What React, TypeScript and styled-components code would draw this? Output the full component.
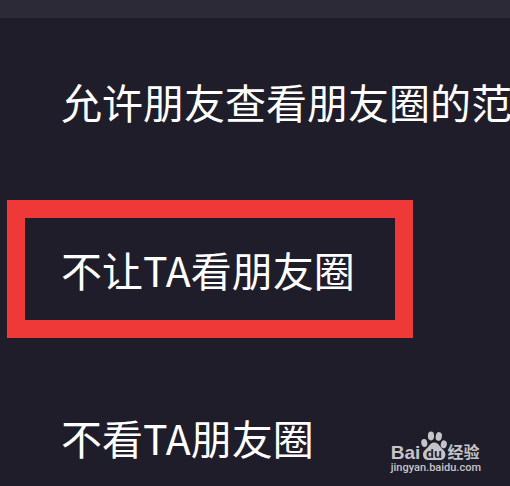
import React from 'react';
import styled, { createGlobalStyle } from 'styled-components';

const GlobalStyle = createGlobalStyle`
  * {
    box-sizing: border-box;
  }

  body {
    margin: 0;
    background: #1f1d2a;
    font-family: 'Noto Sans CJK SC', 'Noto Sans', sans-serif;
  }
`;

const Page = styled.main`
  position: relative;
  display: flex;
  flex-direction: column;
  height: 100vh;
  overflow: hidden;
  color: #fff;
`;

const SectionGap = styled.div`
  flex: none;
  height: 18px;
  background: #2b2a36;
`;

const Settings = styled.ul`
  margin: 0;
  padding: 0;
  list-style: none;
`;

const SettingItem = styled.li`
  position: relative;
`;

const SettingButton = styled.button`
  display: flex;
  align-items: center;
  width: 100%;
  height: 168px;
  padding: 0 0 2px 61px;
  border: 0;
  background: none;
  color: inherit;
  font: inherit;
  font-size: 41px;
  line-height: 60px;
  white-space: nowrap;
  text-align: left;
  cursor: pointer;
`;

const Highlight = styled.span`
  position: absolute;
  top: 14px;
  bottom: 16px;
  left: 7px;
  width: 406px;
  border: 18px solid #ef3838;
  pointer-events: none;
`;

const Watermark = styled.a`
  position: absolute;
  right: 29px;
  bottom: 10px;
  display: flex;
  flex-direction: column;
  color: #c5c4c9;
  text-decoration: none;
`;

const Brand = styled.span`
  display: flex;
  align-items: flex-end;
  height: 30px;
`;

const BrandName = styled.span`
  font: bold 19px/14px 'Liberation Sans', sans-serif;
`;

const BrandSuffix = styled.span`
  font-size: 16px;
  font-weight: 700;
  line-height: 18px;
`;

const Site = styled.span`
  font: 500 11px/16px Roboto, sans-serif;
`;

const PawText = styled.text`
  font: bold 13px 'Liberation Sans', sans-serif;
  fill: #1f1d2a;
`;

function Paw() {
  return (
    <svg width="27" height="30" viewBox="0 0 27 30" fill="currentColor" aria-hidden="true">
      <ellipse cx="4.3" cy="13" rx="3" ry="4" transform="rotate(-10 4.3 13)" />
      <ellipse cx="11" cy="6" rx="3.1" ry="4.4" />
      <ellipse cx="18.8" cy="6.5" rx="3.1" ry="4.4" transform="rotate(10 18.8 6.5)" />
      <ellipse cx="23.8" cy="14.3" rx="3" ry="4" transform="rotate(12 23.8 14.3)" />
      <path d="M14.300 12.500c-3 0-4.300 2-5.800 4C6.500 19 3 20.700 3 24.500 3 27.800 5.200 30 8.200 30h11.900c3 0 5.300-2.200 5.300-5.500 0-3.600-3.200-5.300-5.300-8-1.500-2-2.800-4-5.800-4Z" />
      <PawText x="6" y="28">du</PawText>
    </svg>
  );
}

const settings = [
  { label: '允许朋友查看朋友圈的范围', highlighted: false },
  { label: '不让TA看朋友圈', highlighted: true },
  { label: '不看TA朋友圈', highlighted: false },
];

export default function App() {
  return (
    <>
      <GlobalStyle />
      <Page>
        <SectionGap />
        <Settings>
          {settings.map(({ label, highlighted }) => (
            <SettingItem key={label}>
              <SettingButton type="button">{label}</SettingButton>
              {highlighted && <Highlight />}
            </SettingItem>
          ))}
        </Settings>
        <Watermark href="https://jingyan.baidu.com">
          <Brand>
            <BrandName>Bai</BrandName>
            <Paw />
            <BrandSuffix>经验</BrandSuffix>
          </Brand>
          <Site>jingyan.baidu.com</Site>
        </Watermark>
      </Page>
    </>
  );
}
